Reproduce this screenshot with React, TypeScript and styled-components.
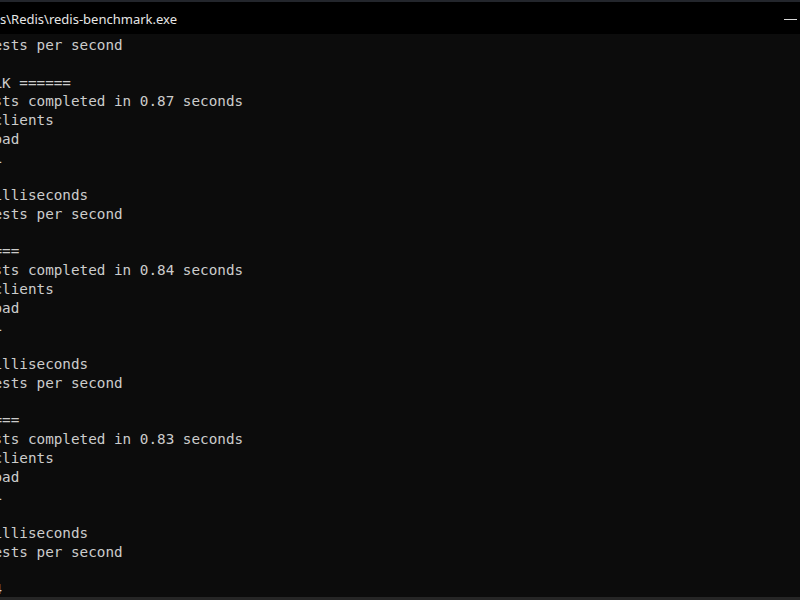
import React from "react";
import styled, { createGlobalStyle } from "styled-components";

const Global = createGlobalStyle`
  html, body {
    margin: 0;
    padding: 0;
    background: #0c0c0c;
    overflow: hidden;
  }
`;

const Window = styled.div`
  width: 800px;
  height: 600px;
  display: flex;
  flex-direction: column;
  overflow: hidden;
  background: #0c0c0c;
`;

const DesktopStrip = styled.div<{ $h: number; $bg: string }>`
  height: ${(p) => p.$h}px;
  flex: none;
  background: ${(p) => p.$bg};
`;

const TitleBar = styled.div`
  height: 32px;
  flex: none;
  background: #000;
  display: flex;
  align-items: center;
  justify-content: space-between;
  padding-right: 3px;
`;

const Title = styled.span`
  font-family: "Noto Sans", "Open Sans", sans-serif;
  font-size: 13px;
  color: #e6e6e6;
  white-space: pre;
  margin-top: 2px;
`;

const MinimizeButton = styled.div`
  width: 13px;
  height: 1px;
  background: #d8d8d8;
  margin-top: 2px;
`;

const Console = styled.div`
  flex: 1;
  overflow: hidden;
  background: #0c0c0c;
  padding-top: 2px;
  margin-left: -6.5px;
`;

const Line = styled.div`
  height: 18.78px;
  line-height: 18.78px;
  font-family: "DejaVu Sans Mono", "Liberation Mono", monospace;
  font-size: 14.3px;
  color: #cccccc;
  white-space: pre;
`;

const lines = [
  "ests per second",
  "",
  "LK ======",
  "sts completed in 0.87 seconds",
  "clients",
  "oad",
  "1",
  "",
  "illiseconds",
  "ests per second",
  "",
  "===",
  "sts completed in 0.84 seconds",
  "clients",
  "oad",
  "1",
  "",
  "illiseconds",
  "ests per second",
  "",
  "===",
  "sts completed in 0.83 seconds",
  "clients",
  "oad",
  "1",
  "",
  "illiseconds",
  "ests per second",
  "",
  "4",
];

export default function App() {
  return (
    <>
      <Global />
      <Window>
        <DesktopStrip $h={2} $bg="#23262c" />
        <TitleBar>
          <Title>s\Redis\redis-benchmark.exe</Title>
          <MinimizeButton />
        </TitleBar>
        <Console>
          {lines.map((l, i) => (
            <Line key={i}>{l}</Line>
          ))}
        </Console>
        <DesktopStrip $h={3} $bg="#262626" />
      </Window>
    </>
  );
}
